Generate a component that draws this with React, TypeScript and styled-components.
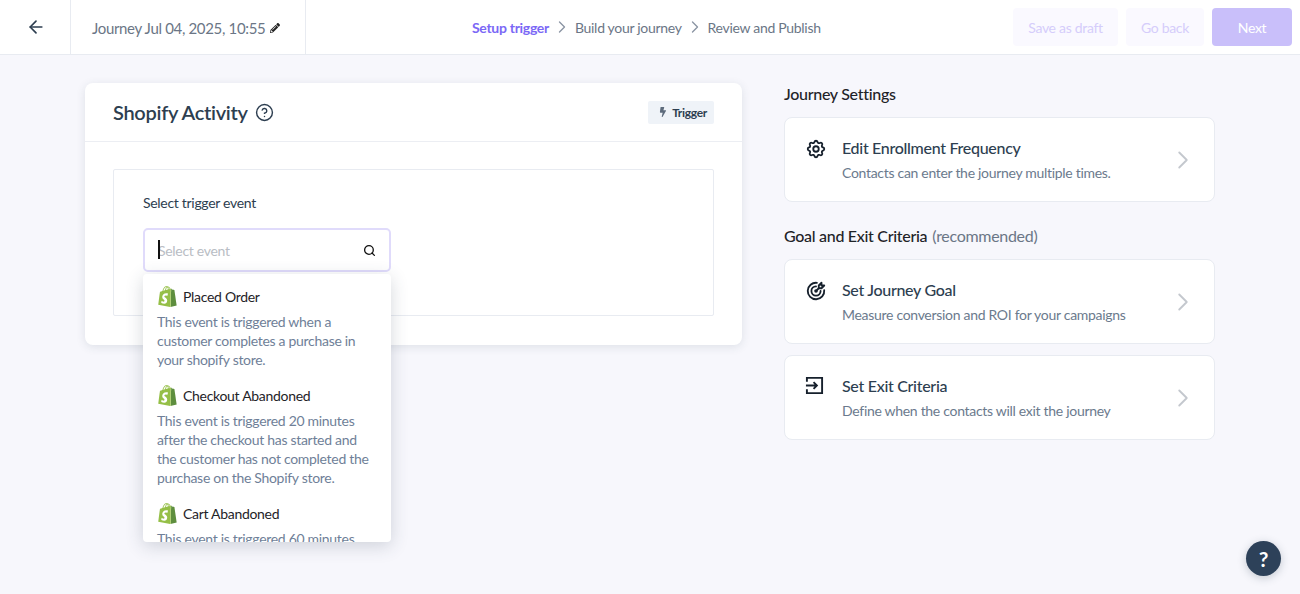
import React from "react";
import styled, { createGlobalStyle } from "styled-components";
import { ArrowLeft, ChevronRight, CircleHelp, Search } from "lucide-react";
import { FaPencilAlt, FaBolt } from "react-icons/fa";
import { SiShopify } from "react-icons/si";
import { TbSettings, TbTargetArrow } from "react-icons/tb";

const Global = createGlobalStyle`
  html, body { margin: 0; padding: 0; height: 100%; }
  body { font-family: Lato, "Open Sans", "Liberation Sans", sans-serif; background: #f7f7fc; overflow: hidden; letter-spacing: -0.3px; }
  * { box-sizing: border-box; }
`;

const Page = styled.div`
  width: 1300px;
  height: 594px;
  position: relative;
  background: #f7f7fc;
`;

const Header = styled.header`
  display: flex;
  align-items: stretch;
  height: 55px;
  background: #fff;
  border-bottom: 1px solid #e8ebf1;
`;

const BackCell = styled.div`
  width: 71px;
  display: flex;
  align-items: center;
  justify-content: center;
  padding-left: 1px;
  border-right: 1px solid #e8ebf1;
  color: #2d3e50;
`;

const TitleCell = styled.div`
  width: 235px;
  display: flex;
  align-items: center;
  gap: 5px;
  padding: 1px 0 0 21px;
  border-right: 1px solid #e8ebf1;
  font-size: 15px;
  letter-spacing: -0.33px;
  color: #6b7686;
  white-space: nowrap;
`;

const PencilMark = styled.span`
  display: flex;
  color: #222;
  font-size: 10px;
`;

const Steps = styled.nav`
  display: flex;
  align-items: center;
  margin-left: 166px;
  gap: 3px;
  width: 541px;
`;

const Step = styled.span<{ $active?: boolean }>`
  font-size: 14px;
  font-weight: ${(p) => (p.$active ? 700 : 400)};
  color: ${(p) => (p.$active ? "#7b68f6" : "#6b7686")};
  white-space: nowrap;
`;

const StepChevron = styled.span`
  display: flex;
  color: #8a94a3;
`;

const Actions = styled.div`
  display: flex;
  align-items: center;
  gap: 8px;
`;

const Button = styled.button<{ $primary?: boolean; $w: number }>`
  width: ${(p) => p.$w}px;
  height: 38px;
  border: 0;
  border-radius: 4px;
  font-family: inherit;
  letter-spacing: inherit;
  font-size: 14px;
  background: ${(p) => (p.$primary ? "#c9bffa" : "#faf9ff")};
  color: ${(p) => (p.$primary ? "#fff" : "#d5cdfb")};
`;

const Main = styled.main`
  display: flex;
  align-items: flex-start;
  gap: 42px;
  padding: 28px 0 0 85px;
`;

const Panel = styled.section`
  width: 657px;
  height: 262px;
  background: #fff;
  border-radius: 8px;
  box-shadow: 0 2px 10px rgba(45, 62, 80, 0.12);
`;

const PanelHead = styled.div`
  height: 59px;
  display: flex;
  align-items: center;
  justify-content: space-between;
  padding: 0 28px;
  border-bottom: 1px solid #eceef3;
`;

const PanelTitle = styled.h2`
  margin: 0;
  display: flex;
  align-items: center;
  gap: 7px;
  font-size: 20px;
  font-weight: 600;
  color: #2d3e50;
`;

const TriggerTag = styled.span`
  display: flex;
  align-items: center;
  gap: 4px;
  height: 23px;
  padding: 0 7px 0 10px;
  background: #eff3f8;
  border-radius: 2px;
  font-size: 12px;
  font-weight: 700;
  color: #2d3e50;
`;

const PanelBody = styled.div`
  padding: 27px 28px;
`;

const Box = styled.div`
  height: 147px;
  border: 1px solid #e8ebf1;
  border-radius: 2px;
  padding: 24px 29px;
`;

const Label = styled.div`
  font-size: 14px;
  line-height: 17px;
  color: #2d3e50;
  margin-bottom: 17px;
`;

const Combo = styled.div`
  position: relative;
  width: 248px;
`;

const InputWrap = styled.div`
  position: relative;
  display: flex;
  align-items: center;
  height: 44px;
  padding: 0 13px;
  background: #fff;
  border: 2px solid #e0dbfb;
  border-radius: 5px;
  color: #111;
`;

const Input = styled.input`
  flex: 1;
  min-width: 0;
  border: 0;
  outline: 0;
  padding: 0;
  font-family: inherit;
  letter-spacing: inherit;
  font-size: 14px;
  &::placeholder { color: #b9bdc4; opacity: 1; }
`;

const Caret = styled.span`
  position: absolute;
  left: 13px;
  top: 10px;
  width: 1.5px;
  height: 19px;
  background: #111;
`;

const Menu = styled.div`
  position: absolute;
  left: 0;
  top: 46px;
  width: 248px;
  height: 268px;
  overflow: hidden;
  background: #fff;
  border-radius: 4px;
  box-shadow: 0 4px 18px rgba(45, 62, 80, 0.2);
  padding: 12px 14px 0;
`;

const MenuItem = styled.div`
  margin-bottom: 16px;
`;

const MenuTitle = styled.div`
  display: flex;
  align-items: center;
  gap: 5px;
  height: 20px;
  font-size: 14px;
  color: #1f2328;
  margin-bottom: 6px;
`;

const BagIcon = styled.span`
  display: flex;
  font-size: 21px;
  svg { fill: url(#shopifyBagShade); }
`;

const HiddenDefs = styled.svg`
  position: absolute;
  width: 0;
  height: 0;
`;

const MenuText = styled.div`
  font-size: 14px;
  line-height: 19px;
  color: #6f7f98;
`;

const Side = styled.aside`
  width: 431px;
`;

const SideHeading = styled.h3<{ $top: number }>`
  margin: ${(p) => p.$top}px 0 13px;
  font-size: 16px;
  line-height: 20px;
  font-weight: 500;
  color: #1f2328;
`;

const Muted = styled.span`
  margin-left: 5px;
  font-weight: 400;
  color: #6b7686;
`;

const SettingCard = styled.div<{ $mb?: number }>`
  display: flex;
  align-items: center;
  height: 85px;
  margin-bottom: ${(p) => p.$mb ?? 0}px;
  padding: 0 16px 0 20px;
  background: #fff;
  border: 1px solid #e8ebf1;
  border-radius: 8px;
`;

const SettingIcon = styled.span`
  width: 37px;
  flex: none;
  align-self: flex-start;
  padding-top: 20px;
  display: flex;
  color: #16202c;
`;

const SettingBody = styled.div`
  flex: 1;
`;

const SettingTitle = styled.div`
  font-size: 16px;
  line-height: 20px;
  font-weight: 500;
  color: #2d3e50;
  margin-bottom: 6px;
`;

const SettingDesc = styled.div`
  font-size: 14px;
  line-height: 18px;
  color: #6b7a8d;
`;

const CardChevron = styled.span`
  display: flex;
  color: #c4c8ce;
`;

const HelpFab = styled.button`
  position: absolute;
  left: 1246px;
  top: 541px;
  width: 35px;
  height: 35px;
  border: 0;
  border-radius: 50%;
  background: #2d4159;
  color: #fff;
  font-family: inherit;
  font-size: 21px;
  font-weight: 700;
  padding: 0;
  box-shadow: 0 2px 8px rgba(45, 62, 80, 0.25);
`;

const ExitIcon = () => (
  <svg width="19" height="19" viewBox="0 0 20 20" fill="none" stroke="currentColor" strokeWidth="2">
    <path d="M2 6V2h16v16H2v-4" />
    <path d="M1 10h11M9 6.5l3.5 3.5L9 13.5" />
  </svg>
);

const events = [
  { title: "Placed Order", text: "This event is triggered when a customer completes a purchase in your shopify store." },
  { title: "Checkout Abandoned", text: "This event is triggered 20 minutes after the checkout has started and the customer has not completed the purchase on the Shopify store." },
  { title: "Cart Abandoned", text: "This event is triggered 60 minutes after the customer has added an item to the cart." },
];

const cardChevron = <CardChevron><ChevronRight size={30} strokeWidth={1.5} /></CardChevron>;

export default function App() {
  return (
    <Page>
      <Global />
      <HiddenDefs aria-hidden="true">
        <defs>
          <linearGradient id="shopifyBagShade" x1="0" x2="1" y1="0" y2="0">
            <stop offset="0.68" stopColor="#95bf47" />
            <stop offset="0.68" stopColor="#5e8e3e" />
          </linearGradient>
        </defs>
      </HiddenDefs>
      <Header>
        <BackCell><ArrowLeft size={20} strokeWidth={2} /></BackCell>
        <TitleCell>
          Journey Jul 04, 2025, 10:55
          <PencilMark><FaPencilAlt /></PencilMark>
        </TitleCell>
        <Steps>
          <Step $active>Setup trigger</Step>
          <StepChevron><ChevronRight size={20} strokeWidth={1.6} /></StepChevron>
          <Step>Build your journey</Step>
          <StepChevron><ChevronRight size={20} strokeWidth={1.6} /></StepChevron>
          <Step>Review and Publish</Step>
        </Steps>
        <Actions>
          <Button $w={105}>Save as draft</Button>
          <Button $w={78}>Go back</Button>
          <Button $w={80} $primary>Next</Button>
        </Actions>
      </Header>
      <Main>
        <Panel>
          <PanelHead>
            <PanelTitle>
              Shopify Activity
              <CircleHelp size={19} strokeWidth={1.8} />
            </PanelTitle>
            <TriggerTag><FaBolt size={10} color="#5d6b7c" />Trigger</TriggerTag>
          </PanelHead>
          <PanelBody>
            <Box>
              <Label>Select trigger event</Label>
              <Combo>
                <InputWrap>
                  <Input placeholder="Select event" readOnly />
                  <Caret />
                  <Search size={13} strokeWidth={2.4} />
                </InputWrap>
                <Menu>
                  {events.map((e) => (
                    <MenuItem key={e.title}>
                      <MenuTitle>
                        <BagIcon><SiShopify /></BagIcon>
                        {e.title}
                      </MenuTitle>
                      <MenuText>{e.text}</MenuText>
                    </MenuItem>
                  ))}
                </Menu>
              </Combo>
            </Box>
          </PanelBody>
        </Panel>
        <Side>
          <SideHeading $top={1}>Journey Settings</SideHeading>
          <SettingCard>
            <SettingIcon><TbSettings size={22} /></SettingIcon>
            <SettingBody>
              <SettingTitle>Edit Enrollment Frequency</SettingTitle>
              <SettingDesc>Contacts can enter the journey multiple times.</SettingDesc>
            </SettingBody>
            {cardChevron}
          </SettingCard>
          <SideHeading $top={24}>Goal and Exit Criteria<Muted>(recommended)</Muted></SideHeading>
          <SettingCard $mb={11}>
            <SettingIcon><TbTargetArrow size={22} /></SettingIcon>
            <SettingBody>
              <SettingTitle>Set Journey Goal</SettingTitle>
              <SettingDesc>Measure conversion and ROI for your campaigns</SettingDesc>
            </SettingBody>
            {cardChevron}
          </SettingCard>
          <SettingCard>
            <SettingIcon><ExitIcon /></SettingIcon>
            <SettingBody>
              <SettingTitle>Set Exit Criteria</SettingTitle>
              <SettingDesc>Define when the contacts will exit the journey</SettingDesc>
            </SettingBody>
            {cardChevron}
          </SettingCard>
        </Side>
      </Main>
      <HelpFab>?</HelpFab>
    </Page>
  );
}
